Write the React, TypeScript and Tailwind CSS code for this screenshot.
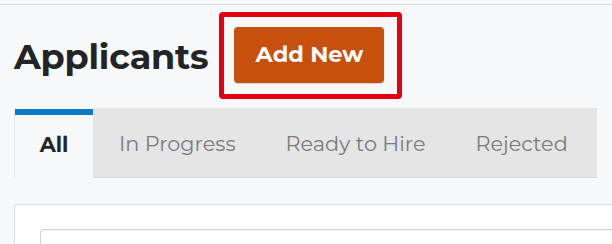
import React from "react";

export default function App() {
  const tabs = ["In Progress", "Ready to Hire", "Rejected"];
  return (
    <div
      className="w-[612px] h-[244px] overflow-hidden bg-[#f7f8fa] pt-[4px]"
      style={{ fontFamily: "Montserrat, Inter, 'Noto Sans', sans-serif" }}
    >
      <div className="border-t border-[#d6dae2]" />
      <div className="flex items-center pl-[14px] pt-[7px]">
        <h1 className="text-[35px] font-bold text-[#222426] tracking-[-0.2px] leading-none pt-[2px]">
          Applicants
        </h1>
        <div className="ml-[11px] border-[5px] border-[#e3000f] rounded-[4px] pl-[10px] pr-[13px] pt-[10px] pb-[11px]">
          <button className="w-[150px] h-[56px] bg-[#c8500f] rounded-[4px] text-white font-bold text-[22.5px] shadow-[0_1px_1px_rgba(0,0,0,0.15)]">
            Add New
          </button>
        </div>
      </div>
      <div className="ml-[14px] mt-[9px] flex h-[70px]">
        <div className="w-[79px] shrink-0 flex flex-col border-l border-[#e3e5e9]">
          <div className="h-[6px] bg-[#0b7bc6] mt-[1px]" />
          <div className="flex-1 flex items-center justify-center text-[21px] font-bold text-[#222426] pb-[3px]">
            All
          </div>
        </div>
        <div className="w-[504px] shrink-0 overflow-hidden flex bg-[#e5e5e5] border-b border-[#d9dadc] pl-[1px]">
          {tabs.map((t) => (
            <div
              key={t}
              className="px-[25px] shrink-0 whitespace-nowrap flex items-center text-[20.8px] text-[#7a7b7d] pt-[2px]"
            >
              {t}
            </div>
          ))}
        </div>
      </div>
      <div className="ml-[14px] mt-[26px] h-[80px] bg-white border border-r-0 border-[#d9dce3] rounded-l-[4px] pt-[24px] pl-[25px]">
        <div className="h-[50px] border border-r-0 border-[#cfd3da] rounded-l-[4px] shadow-[inset_0_1px_2px_rgba(0,0,0,0.06)]" />
      </div>
    </div>
  );
}
